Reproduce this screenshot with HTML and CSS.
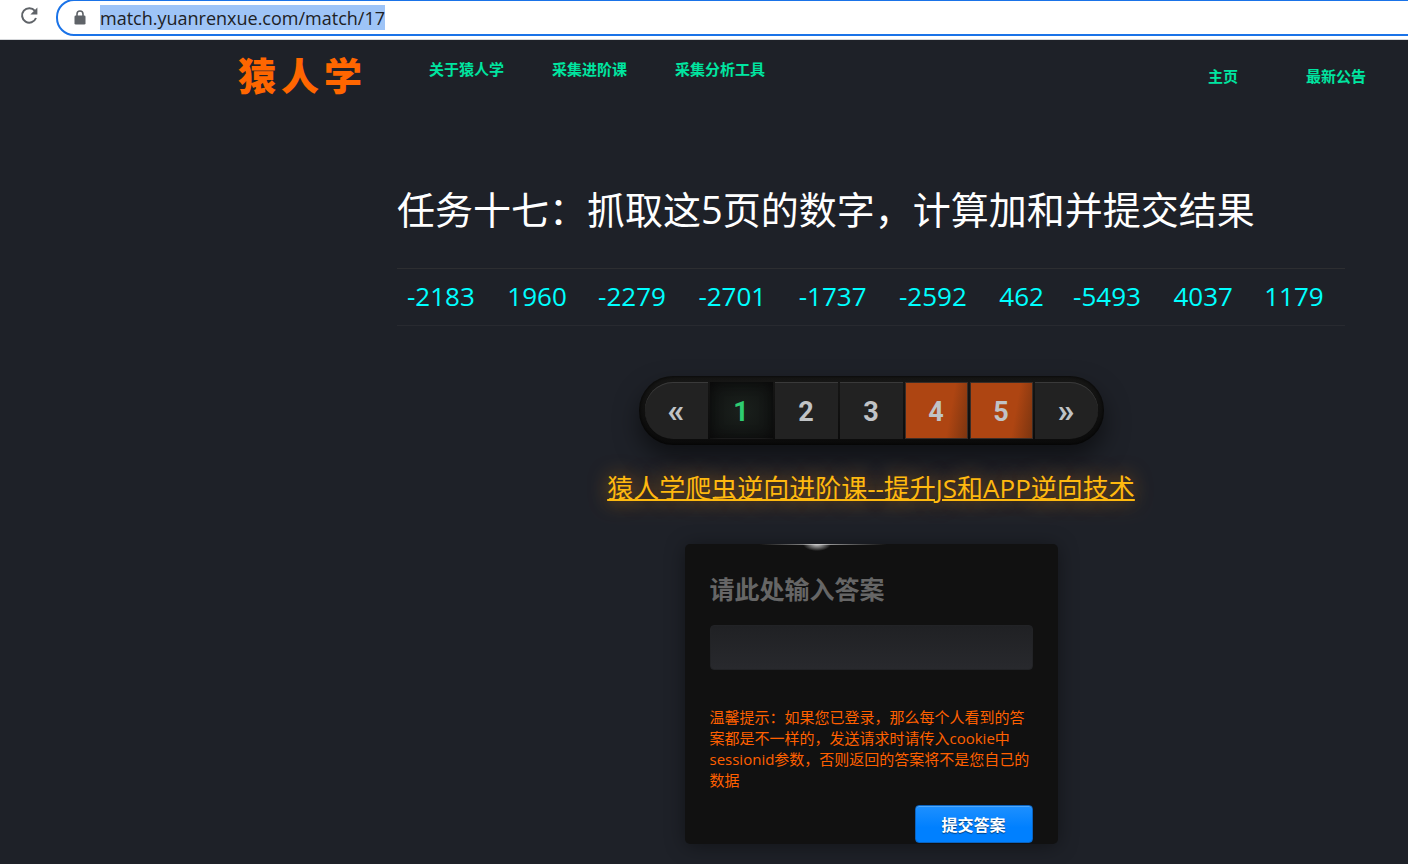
FILE: index.html
```
<!DOCTYPE html>
<html lang="zh-CN">
<head>
<meta charset="utf-8">
<title>猿人学</title>
<link rel="stylesheet" href="styles.css">
</head>
<body>
<div class="browser">
  <button class="reload" type="button" aria-label="刷新">
    <svg width="20" height="20" viewBox="0 0 20 20"><path d="M15.9 4.9A7.2 7.2 0 1 0 17 12" fill="none" stroke="#5f6368" stroke-width="2"/><path d="M18.4 1.6v7h-7z" fill="#5f6368"/></svg>
  </button>
  <div class="omnibox">
    <svg width="12" height="15" viewBox="0 0 12 15"><path d="M3 6V4a3 3 0 0 1 6 0v2" fill="none" stroke="#5f6368" stroke-width="1.6"/><rect x="0.5" y="5.5" width="11" height="9" rx="1.3" fill="#5f6368"/></svg>
    <input class="url" type="text" aria-label="地址" value="match.yuanrenxue.com/match/17">
  </div>
</div>
<header class="site-header">
  <a class="logo" href="#"><span>猿</span><span>人</span><span>学</span></a>
  <nav class="nav-main">
    <a href="#">关于猿人学</a>
    <a href="#">采集进阶课</a>
    <a href="#">采集分析工具</a>
  </nav>
  <nav class="nav-side">
    <a href="#">主页</a>
    <a href="#">最新公告</a>
  </nav>
</header>
<main class="content">
  <h1 class="title">任务十七：抓取这5页的数字，计算加和并提交结果</h1>
  <table class="numbers">
    <tr><td>-2183</td><td>1960</td><td>-2279</td><td>-2701</td><td>-1737</td><td>-2592</td><td>462</td><td>-5493</td><td>4037</td><td>1179</td></tr>
  </table>
  <nav class="pager" aria-label="分页">
    <a class="page step" href="#">«</a>
    <a class="page current" href="#">1</a>
    <a class="page" href="#">2</a>
    <a class="page" href="#">3</a>
    <a class="page locked" href="#">4</a>
    <a class="page locked" href="#">5</a>
    <a class="page step" href="#">»</a>
  </nav>
  <a class="promo" href="#">猿人学爬虫逆向进阶课--提升JS和APP逆向技术</a>
  <form class="answer">
    <label class="answer-label" for="answer">请此处输入答案</label>
    <input class="answer-input" id="answer" type="text">
    <p class="hint">温馨提示：如果您已登录，那么每个人看到的答案都是不一样的，发送请求时请传入cookie中sessionid参数，否则返回的答案将不是您自己的数据</p>
    <button class="submit" type="button">提交答案</button>
  </form>
</main>
</body>
</html>
```
FILE: styles.css
```
* {
  box-sizing: border-box;
}

body {
  margin: 0;
  min-height: 100vh;
  background: #1e2128;
  color: #fff;
  font-family: "Open Sans", "Noto Sans CJK SC", sans-serif;
  overflow-x: hidden;
}

a {
  text-decoration: none;
}

.browser {
  display: flex;
  align-items: flex-start;
  gap: 17px;
  height: 40px;
  padding-left: 19px;
  background: #fff;
  border-bottom: 1px solid #d5d7da;
  overflow: hidden;
}

.reload {
  display: flex;
  margin: 6px 0 0;
  padding: 0;
  border: 0;
  background: none;
}

.omnibox {
  display: flex;
  flex: 1;
  align-items: center;
  gap: 14px;
  height: 37px;
  margin: -1px -20px 0 0;
  padding-left: 16px;
  border: 2px solid #1a73e8;
  border-radius: 18px;
}

.url {
  width: auto;
  height: 25px;
  padding: 0;
  border: 0;
  background: #9ec4f7;
  color: #202124;
  font-family: "Open Sans", sans-serif;
  font-size: 18px;
  field-sizing: content;
  min-width: 281px;
  outline: 0;
}

.site-header {
  display: flex;
  padding: 15px 42px 0 238px;
  font-size: 15px;
  font-weight: 700;
  line-height: 20px;
}

.site-header nav {
  display: flex;
}

.site-header nav a {
  color: #00e5a0;
}

.logo {
  display: flex;
  gap: 5px;
  color: #ff6600;
  font-size: 38px;
  font-weight: 900;
  line-height: 40px;
}

.site-header .nav-main {
  gap: 48px;
  margin: 4px 0 0 67px;
}

.site-header .nav-side {
  gap: 68px;
  margin: 11px 0 0 auto;
}

.content {
  display: flex;
  flex-direction: column;
  align-items: center;
  padding: 84px 63px 20px 397px;
}

.title {
  align-self: stretch;
  margin: 0;
  font-size: 38px;
  font-weight: 400;
  line-height: 60px;
}

.numbers {
  width: 100%;
  margin-top: 29px;
  border-collapse: collapse;
  border-top: 1px solid #2d2e31;
  border-bottom: 1px solid #282a30;
  color: #00ffff;
  font-size: 26px;
  line-height: 36px;
}

.numbers td {
  padding: 9px 10px 11px;
}

.pager {
  display: flex;
  gap: 2px;
  margin-top: 50px;
  padding: 6px;
  border-radius: 34px;
  background: linear-gradient(#171716, #0b0b0b);
  box-shadow: inset 0 0 4px #000, 0 12px 24px rgba(0, 0, 0, 0.5);
}

.page {
  width: 63px;
  height: 57px;
  background: #222;
  box-shadow: inset 0 1px 0 #3a3a3a;
  color: #c0c3c6;
  font-family: Roboto, sans-serif;
  font-size: 27px;
  font-weight: 700;
  line-height: 60px;
  text-align: center;
}

.page.step {
  font-size: 34px;
  line-height: 56px;
}

.page:first-child {
  border-radius: 28px 0 0 28px;
}

.page:last-child {
  border-radius: 0 28px 28px 0;
}

.page.current {
  background: radial-gradient(#1a201c, #0f1010);
  box-shadow: inset 0 0 12px #090909, inset 0 -1px 0 #2b2b2b;
  color: #2ecc71;
}

.page.locked {
  border: 1px solid #3a2d27;
  background: linear-gradient(100deg, #ae4512 70%, #7c3510);
  box-shadow: none;
  line-height: 58px;
}

.promo {
  margin-top: 24px;
  color: #ffb90f;
  font-size: 26px;
  line-height: 38px;
  text-decoration: underline;
  text-decoration-thickness: 2px;
  text-shadow: 0 0 20px rgba(255, 140, 0, 0.6);
}

.answer {
  display: flex;
  flex-direction: column;
  width: 373px;
  margin-top: 37px;
  padding: 25px 25px 1px;
  border-radius: 5px;
  background: radial-gradient(ellipse 14px 7px at 132px 0, #ccc, rgba(204, 204, 204, 0)), linear-gradient(90deg, rgba(200, 200, 200, 0) 20%, #aaa 36%, rgba(200, 200, 200, 0) 54%) 0 0 / 100% 1px no-repeat, #111;
  box-shadow: 0 2px 20px rgba(0, 0, 0, 0.4);
}

.answer-label {
  color: #666;
  font-size: 25px;
  font-weight: 700;
  line-height: 40px;
}

.answer-input {
  width: 100%;
  height: 45px;
  margin-top: 16px;
  padding: 0 12px;
  border: 1px solid #222326;
  border-radius: 4px;
  background: linear-gradient(#202124, #28292d);
  color: #fff;
  font-size: 16px;
}

.hint {
  margin: 37px 0 14px;
  color: #ff6000;
  font-size: 15px;
  line-height: 21px;
}

.submit {
  align-self: flex-end;
  width: 118px;
  height: 38px;
  padding: 0;
  border: 1px solid #0a63c0;
  border-radius: 4px;
  background: linear-gradient(#1e90ff, #0080ff 60%);
  box-shadow: inset 0 1px 0 #52a8f8;
  color: #fff;
  font-family: inherit;
  font-size: 16px;
  font-weight: 700;
  text-shadow: 0 1px 1px #003f80;
}
```
